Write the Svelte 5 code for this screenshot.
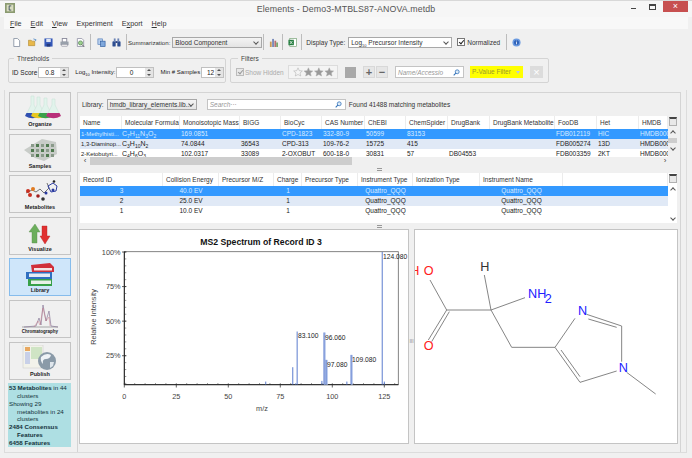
<script>
	const columnsA = ['Name', 'Molecular Formula', 'Monoisotopic Mass', 'BIGG', 'BioCyc', 'CAS Number', 'ChEBI', 'ChemSpider', 'DrugBank', 'DrugBank Metabolite', 'FooDB', 'Het', 'HMDB'];
	const metabolites = [
		{ name: '1-Methylhisti...', formula: [['C', 7], ['H', 11], ['N', 3], ['O', 2]], rest: ['169.0851', '', 'CPD-1823', '332-80-9', '50599', '83153', '', '', 'FDB012119', 'HIC', 'HMDB000'] },
		{ name: '1,3-Diaminop...', formula: [['C', 3], ['H', 10], ['N', 2]], rest: ['74.0844', '36543', 'CPD-313', '109-76-2', '15725', '415', '', '', 'FDB005274', '13D', 'HMDB000'] },
		{ name: '2-Ketobutyri...', formula: [['C', 4], ['H', 6], ['O', 3]], rest: ['102.0317', '33089', '2-OXOBUT', '600-18-0', '30831', '57', 'DB04553', '', 'FDB003359', '2KT', 'HMDB000'] }
	];
	const columnsB = ['Record ID', 'Collision Energy', 'Precursor M/Z', 'Charge', 'Precursor Type', 'Instrument Type', 'Ionization Type', 'Instrument Name', ''];
	const records = [
		['3', '40.0 EV', '', '1', '', 'Quattro_QQQ', '', 'Quattro_QQQ', ''],
		['2', '25.0 EV', '', '1', '', 'Quattro_QQQ', '', 'Quattro_QQQ', ''],
		['1', '10.0 EV', '', '1', '', 'Quattro_QQQ', '', 'Quattro_QQQ', '']
	];
	const navItems = ['Organize', 'Samples', 'Metabolites', 'Visualize', 'Library', 'Chromatography', 'Publish'];
	const flasks = [[10, '#2f4fb0'], [16, '#e8c820'], [23, '#3aa04a'], [31, '#b8307a']];

	// chart scales, in svg coordinates of the spectrum panel
	const xOf = (mz) => 44.3 + mz * 2.08;
	const yOf = (pct) => 160.3 - pct * 1.383;
	const peaks = [[68, 6.3], [81, 16.7], [82.4, 5], [83.1, 42.5], [95, 6.8], [96, 41.8], [97, 22], [107, 6.3], [109, 25.6], [124, 100], [125, 6.3]];
	const palePeaks = [[96, 41.8], [97, 22], [109, 25.6]];
	const peakLabels = [
		{ t: '83.100', x: 218, y: 108 }, { t: '96.060', x: 245, y: 110 },
		{ t: '97.080', x: 247, y: 137 }, { t: '109.080', x: 272, y: 132 }, { t: '124.080', x: 303, y: 29 }
	];
	const xTicks = [0, 25, 50, 75, 100, 125];
	const xMinor = Array.from({ length: 27 }, (_, i) => i * 5);
	const yTicks = [25, 50, 75, 100];
	const yMinor = Array.from({ length: 20 }, (_, i) => 5 + i * 5);
</script>

<div class="window">
	<header class="titlebar">
		<svg class="appicon" viewBox="0 0 12 12"><rect width="12" height="12" fill="#8a9a70"/><rect x="2" y="2" width="8" height="8" fill="#d8dcc0"/><path d="M7.5 3.5H5v5h2.5" stroke="#345" fill="none"/></svg>
		<span class="title">Elements - Demo3-MTBLS87-ANOVA.metdb</span>
		<div class="winbtns">
			<span class="min"></span>
			<span class="max"></span>
			<span class="close">×</span>
		</div>
	</header>

	<nav class="menubar">
		<span><u>F</u>ile</span>
		<span><u>E</u>dit</span>
		<span><u>V</u>iew</span>
		<span>Experiment</span>
		<span>E<u>x</u>port</span>
		<span><u>H</u>elp</span>
	</nav>

	<div class="toolbar">
		<svg class="tool" viewBox="0 0 10 10"><path d="M2 .5h4l2.500 2.500V9.500H2z" fill="#fff" stroke="#8b95a5"/></svg>
		<svg class="tool" viewBox="0 0 10 10"><path d="M.5 8.500V2.500h3l1 1h3v5z" fill="#e8b84a" stroke="#a87f25" stroke-width=".6"/><path d="M6 1l3 1-1 1.500" stroke="#5a90c8" fill="none"/></svg>
		<svg class="tool" viewBox="0 0 10 10"><rect x=".5" y=".5" width="9" height="9" fill="#3458b8"/><rect x="2.500" y="1" width="5" height="3.500" fill="#dfe6f5"/><rect x="3" y="6.500" width="4" height="3" fill="#24397a"/></svg>
		<svg class="tool" viewBox="0 0 10 10"><rect x="2.500" y=".5" width="5" height="4" fill="#fff" stroke="#889"/><rect x=".5" y="4" width="9" height="4" fill="#98a0aa"/><rect x="2" y="7" width="6" height="2.500" fill="#e8e8e8" stroke="#889" stroke-width=".5"/></svg>
		<svg class="tool gapr" viewBox="0 0 10 10"><path d="M1.500 .5h5l2 2v7h-7z" fill="#fff" stroke="#99a"/><circle cx="5" cy="5.500" r="2.300" fill="#9ccf8e" stroke="#4a7a4a" stroke-width=".7"/><path d="M6.500 7.200l2.500 2.500" stroke="#555" stroke-width="1.100"/></svg>
		<i class="sep"></i>
		<svg class="tool gapl" viewBox="0 0 10 10"><rect x="1" y="1" width="5" height="6" fill="#b9d0ee" stroke="#4a78b8" stroke-width=".7"/><rect x="4" y="3.500" width="5" height="6" fill="#7fa8dc" stroke="#2c5a9c" stroke-width=".7"/></svg>
		<svg class="tool gapl" viewBox="0 0 10 10"><rect x=".5" y="3.500" width="3.600" height="6" rx="1" fill="#2d4d90"/><rect x="5.900" y="3.500" width="3.600" height="6" rx="1" fill="#2d4d90"/><rect x="2" y=".5" width="2" height="4" fill="#6b83b5"/><rect x="6" y=".5" width="2" height="4" fill="#6b83b5"/><rect x="4" y="3.500" width="2" height="2" fill="#24397a"/></svg>
		<i class="sep tight"></i>
		<label class="tlabel narrow" for="summ">Summarization:</label>
		<div id="summ" class="combo summ">Blood Component<span class="chev"></span></div>
		<i class="sep"></i>
		<svg class="tool barsicon" viewBox="0 0 10 10"><rect x="1" y="4" width="2" height="6" fill="#c99a58"/><rect x="3.500" y="1" width="2" height="9" fill="#7486b8"/><rect x="6" y="3" width="2" height="7" fill="#b86f6f"/><rect x="8" y="5" width="2" height="5" fill="#7aa86f"/></svg>
		<i class="sep"></i>
		<svg class="tool xlsicon" viewBox="0 0 10 10"><rect x="2" y=".5" width="7.500" height="9" fill="#fff" stroke="#6a9a6a" stroke-width=".7"/><rect x=".5" y="2" width="6" height="6" fill="#1f7a3a"/><path d="M2 3.200l3 3.600M5 3.200l-3 3.600" stroke="#fff" stroke-width=".8"/></svg>
		<i class="sep short"></i>
		<span class="tlabel">Display Type:</span>
		<div class="combo disp">Log<sub>10</sub> Precursor Intensity<span class="chev"></span></div>
		<span class="check on norm"></span>
		<span class="tlabel normtext">Normalized</span>
		<i class="sep"></i>
		<svg class="tool info" viewBox="0 0 10 10"><circle cx="5" cy="5" r="4.500" fill="#6a9ae0"/><circle cx="5" cy="5" r="2.800" fill="#2f62b8"/><path d="M5 3v.8M5 4.500V7" stroke="#fff" stroke-width=".9"/></svg>
	</div>

	<div class="filterbar">
		<fieldset class="thresholds">
			<legend>Thresholds</legend>
			<span class="flabel">ID Score</span>
			<div class="spin w31"><b>0.8</b><span class="arrows"></span></div>
			<span class="flabel lm">Log<sub>10</sub> Intensity:</span>
			<div class="spin w38"><b>0</b><span class="arrows"></span></div>
			<span class="flabel lm">Min # Samples</span>
			<div class="spin w23"><b class="right">12</b><span class="arrows"></span></div>
		</fieldset>
		<fieldset class="filters">
			<legend>Filters</legend>
			<span class="check on dim"></span>
			<span class="flabel dimtext">Show Hidden</span>
			<div class="stars">
				<svg viewBox="0 0 48 12">
					{#each [0, 1, 2, 3] as i}
						<path transform="translate({i * 12.500},0)" d="M6 1l1.500 3.400 3.700.4-2.800 2.400.9 3.600L6 9l-3.300 1.800.9-3.600L.8 4.800l3.700-.4z" fill={i === 0 ? '#f4f4f4' : '#9a9a9a'} stroke="#a8a8a8" stroke-width=".6"/>
					{/each}
				</svg>
			</div>
			<span class="greybox"></span>
			<div class="plusminus"><span>+</span><span>−</span></div>
			<div class="search small">
				<em>Name/Accessio</em>
				<svg viewBox="0 0 10 10"><circle cx="6" cy="4" r="2.800" fill="#dcebf8" stroke="#2f6fb8" stroke-width="1.100"/><path d="M4 6L1 9" stroke="#2f6fb8" stroke-width="1.500"/></svg>
			</div>
			<div class="pvalue">P-Value Filter<span></span></div>
			<span class="xbox">×</span>
		</fieldset>
	</div>

	<div class="body">
		<aside class="sidebar">
			{#each navItems as item}
				<button class="navbtn" class:active={item === 'Library'}>
					<svg class="navicon" viewBox="0 0 44 26">
						{#if item === 'Organize'}
							{#each flasks as f, i}
								<path d="M{f[0] + 3} {1 + i}h3v{9 - i}l5 {10}q-6.500 4-13 0l5-{10}z" fill="#e2f3ec" stroke="#c4e0d4" stroke-width=".5"/>
								<path d="M{f[0] - 1.500} 18h12l1.500 3q-7.500 4.500-15 0z" fill={f[1]}/>
							{/each}
						{:else if item === 'Samples'}
							<path d="M6 13L24 2l14 3 1 12-13 7-9-3z" fill="#c8ccc8"/>
							{#each [0, 1, 2, 3, 4] as c}
								{#each [0, 1, 2] as r}
									<rect x={13 + c * 5} y={7 + r * 5} width="3" height="3" fill={(c + r) % 2 ? '#4f7a4f' : '#8a9a8a'}/>
								{/each}
							{/each}
						{:else if item === 'Metabolites'}
							<path d="M8 15l6-3 4 2 4-3 4 4 5-5-2-5" stroke="#555" stroke-width=".8" fill="none"/>
							<path d="M30 8l5-3 4 3-1 5-5 1z" stroke="#2a3aa0" fill="none"/>
							<circle cx="10" cy="13" r="2" fill="#c83020"/><circle cx="15" cy="11" r="2" fill="#e07a20"/><circle cx="12" cy="17" r="2" fill="#c83020"/>
							<circle cx="20" cy="18" r="1.800" fill="#a02020"/><circle cx="25" cy="21" r="1.800" fill="#333"/><circle cx="28" cy="15" r="1.500" fill="#2a3aa0"/>
							<circle cx="36" cy="3.500" r="1.300" fill="#222"/><circle cx="35" cy="12" r="1.500" fill="#2a3aa0"/>
						{:else if item === 'Visualize'}
							<path d="M17 4l-6 8h3v11h5V12h3z" fill="#6cae5c" stroke="#558a48" stroke-width=".4"/>
							<path d="M27 24l5-8h-3V6h-5v10h-2z" fill="#e03030" stroke="#b02020" stroke-width=".4"/>
						{:else if item === 'Library'}
							<path d="M10 18h24v7H10z" fill="#38a048"/><path d="M13 19.500h20v3.500H13z" fill="#e8f0e8"/>
							<path d="M8 11h26v7H8z" fill="#2f6fc0"/><path d="M11 12.500h21v3.500H11z" fill="#e4ecf6"/>
							<path d="M13 4l19-2 4 4v5H14z" fill="#d02f3a"/><path d="M16 7h18v2.500H16z" fill="#f4e4e4"/>
						{:else if item === 'Chromatography'}
							<path d="M4 24h36" stroke="#777" stroke-width=".6"/>
							<path d="M6 24l12-1 3-8 2 7 2-20 3 16 3-10 2 15 7 1" fill="none" stroke="#8a7a9a" stroke-width=".7"/>
							<path d="M16 24l4-6 2 4 3-17 3 13 3-4 1 9" fill="none" stroke="#c86a7a" stroke-width=".4"/>
						{:else}
							<rect x="5" y="0" width="20" height="23" fill="#f2f2ea" stroke="#c8c8c8" stroke-width=".5"/>
							<rect x="7" y="2" width="5" height="4" fill="#e8a860"/><rect x="13" y="2" width="11" height="12" fill="#cfe4c4"/><rect x="7" y="7" width="5" height="12" fill="#c8d0e8"/>
							<circle cx="29" cy="16" r="9" fill="#8a9aa8"/><path d="M23 12q5-5 10-2q-1 4-5 4t-3 5q-3-3-2-7z" fill="#eef2f6"/><path d="M32 17l4 0-1 4-3 2z" fill="#dfe6ec"/>
						{/if}
					</svg>
					<span class:mini={item === 'Chromatography'}>{item}</span>
				</button>
			{/each}
			<div class="stats">
				<p><b>53 Metabolites</b> in 44 clusters</p>
				<p>Showing 29 metabolites in 24 clusters</p>
				<p><b>2484 Consensus Features</b></p>
				<p><b>6458 Features</b></p>
			</div>
		</aside>

		<main class="content">
			<div class="libraryrow">
				<span class="tlabel">Library:</span>
				<div class="combo lib">hmdb_library_elements.lib...<span class="chev"></span></div>
				<div class="search wide">
					<em>Search···</em>
					<svg viewBox="0 0 10 10"><circle cx="6" cy="4" r="2.800" fill="#dcebf8" stroke="#2f6fb8" stroke-width="1.100"/><path d="M4 6L1 9" stroke="#2f6fb8" stroke-width="1.500"/></svg>
				</div>
				<span class="tlabel found">Found 41488 matching metabolites</span>
			</div>

			<section class="table one">
				<div class="tablemain">
					<div class="row head cols-a">
						{#each columnsA as c}<div class="th">{c}</div>{/each}
					</div>
					<div class="rows">
						{#each metabolites as m, i}
							<div class="row cols-a" class:selected={i === 0} class:alt={i === 1}>
								<div class="td name">{m.name}</div>
								<div class="td formula">{#each m.formula as f}{f[0]}<sub>{f[1]}</sub>{/each}</div>
								{#each m.rest as v}<div class="td">{v}</div>{/each}
							</div>
						{/each}
					</div>
					<div class="hscroll"><span class="arrow">‹</span><div class="thumb"></div><span class="arrow rt">›</span></div>
				</div>
				<div class="vscroll">
					<div class="corner"></div>
					<span class="up"></span>
					<div class="vthumb"></div>
					<span class="down"></span>
				</div>
			</section>
			<div class="grip"><span></span></div>

			<section class="table two">
				<div class="tablemain">
					<div class="row head cols-b">
						{#each columnsB as c}<div class="th">{c}</div>{/each}
					</div>
					<div class="rows tall">
						{#each records as r, i}
							<div class="row cols-b" class:selected={i === 0} class:alt={i === 1}>
								{#each r as v}<div class="td mid">{v}</div>{/each}
							</div>
						{/each}
					</div>
				</div>
				<div class="vscroll">
					<div class="corner"></div>
					<span class="up"></span>
					<div class="spacer"></div>
					<span class="down"></span>
				</div>
			</section>
			<div class="grip low"><span></span></div>

			<div class="panes">
				<div class="pane chart">
					<svg viewBox="0 0 328 213" width="328" height="213">
						<text x="181" y="15" class="charttitle" text-anchor="middle">MS2 Spectrum of Record ID 3</text>
						<rect x="44.300" y="21.700" width="274" height="133" fill="#fff" stroke="#666" stroke-width=".8"/>
						<path d="M44.300 21.700v133h274" stroke="#111" stroke-width=".9" fill="none"/>
						{#each yMinor as p}<line x1="44.300" x2="46.300" y1={yOf(p)} y2={yOf(p)} stroke="#333" stroke-width=".5"/>{/each}
						{#each yTicks as p}
							<line x1="42" x2="46.300" y1={yOf(p)} y2={yOf(p)} stroke="#222" stroke-width=".7"/>
							<text x="40.500" y={yOf(p) + 2.500} class="tick" text-anchor="end">{p}%</text>
						{/each}
						{#each xMinor as m}<line y1="154.700" y2="153" x1={xOf(m)} x2={xOf(m)} stroke="#333" stroke-width=".5"/>{/each}
						{#each xTicks as m}
							<line y1="154.700" y2="157.500" x1={xOf(m)} x2={xOf(m)} stroke="#222" stroke-width=".7"/>
							<text x={xOf(m)} y="168.500" class="tick" text-anchor="middle">{m}</text>
						{/each}
						{#each palePeaks as p}
							<rect x={xOf(p[0])} y={yOf(p[1])} width="1.800" height={154.700 - yOf(p[1])} fill="#b8c8ec"/>
						{/each}
						{#each peaks as p}
							<line x1={xOf(p[0])} x2={xOf(p[0])} y1={yOf(p[1])} y2="154.700" stroke="#4a6ec8" stroke-width=".9"/>
						{/each}
						{#each peakLabels as l}
							<text x={l.x} y={l.y} class="peak">{l.t}</text>
						{/each}
						<text x="182" y="180.500" class="tick" text-anchor="middle">m/z</text>
						<text transform="translate(16,87) rotate(-90)" class="tick" text-anchor="middle">Relative Intensity</text>
					</svg>
				</div>
				<div class="divider"><span>III</span></div>
				<div class="pane molecule">
					<svg viewBox="30 5 786 639" width="262" height="213">
						<g stroke="#777" stroke-width="2.700" fill="none">
							<path d="M125 245L75 155"/>
							<path d="M125 245L70 335M133 250L80 340"/>
							<path d="M125 245H258L238 140"/>
							<path d="M258 245L360 208"/>
							<path d="M258 245L320 357H450L510 270"/>
							<path d="M545 258L650 293M550 272L635 297"/>
							<path d="M650 293V400"/>
							<path d="M635 428L525 462L450 357M525 445L468 365"/>
							<path d="M665 432L752 497"/>
						</g>
						<g class="atom">
							<text x="16" y="141" fill="#ff2020">H</text>
							<text x="56" y="141" fill="#ff2020">O</text>
							<text x="56" y="364" fill="#ff2020">O</text>
							<text x="226" y="127" fill="#333">H</text>
							<text x="369" y="210" fill="#2020ff">NH</text>
							<text x="419" y="225" fill="#2020ff">2</text>
							<text x="519" y="260" fill="#2020ff">N</text>
							<text x="641" y="431" fill="#2020ff">N</text>
						</g>
					</svg>
				</div>
			</div>
		</main>
	</div>
</div>

<style>
	:global(body) {
		margin: 0;
		background: #f0f0f0;
	}

	.window {
		width: 692px;
		height: 458px;
		overflow: hidden;
		display: flex;
		flex-direction: column;
		font-family: "Liberation Sans", Arial, sans-serif;
		font-size: 6.5px;
		color: #222;
		background: #f0f0f0;
	}

	.window sub {
		font-size: 4px;
		line-height: 0;
	}

	.titlebar {
		height: 17px;
		flex: none;
		box-sizing: border-box;
		border-top: 1px solid #d8d8d8;
		display: flex;
		align-items: center;
		justify-content: center;
		background: #f6f6f6;
		position: relative;
	}

	.appicon {
		position: absolute;
		left: 5px;
		top: 2px;
		width: 10px;
		height: 10px;
	}

	.title {
		font-size: 8.800px;
		color: #555;
		letter-spacing: 0.1px;
	}

	.winbtns {
		position: absolute;
		right: 4px;
		top: 0;
		display: flex;
		align-items: flex-start;
	}

	.min {
		width: 5px;
		height: 1px;
		background: #444;
		margin: 7px 13px 0 0;
	}

	.max {
		width: 5px;
		height: 3px;
		border: 1px solid #444;
		border-top-width: 2px;
		margin: 3px 7px 0 0;
	}

	.close {
		width: 25px;
		height: 11px;
		line-height: 11px;
		background: #c75050;
		color: #fff;
		text-align: center;
		font-size: 9px;
	}

	.menubar {
		height: 12px;
		flex: none;
		margin: 0 4px;
		padding-left: 6px;
		display: flex;
		gap: 9px;
		align-items: center;
		background: #f8f8f8;
		font-size: 7.200px;
		color: #333;
	}

	.toolbar {
		height: 26px;
		flex: none;
		margin: 0 4px;
		padding-left: 8px;
		display: flex;
		align-items: center;
		background: #f0f0f0;
	}

	.tool {
		width: 9px;
		height: 9px;
		flex: none;
		margin-right: 7px;
	}

	.gapr {
		margin-right: 5px;
	}

	.gapl {
		margin-left: 1px;
		margin-right: 5px;
	}

	.barsicon {
		margin: 0 4px 0 0;
	}

	.xlsicon {
		margin: 0 4px 0 0;
	}

	.info {
		margin: 0;
	}

	.sep {
		width: 1px;
		height: 16px;
		background: #bcbcbc;
		margin: 0 5px 0 0;
		flex: none;
	}

	.sep.tight {
		margin-right: 1px;
	}

	.sep.short {
		margin-right: 4px;
	}

	.tlabel {
		white-space: nowrap;
		color: #333;
	}

	.narrow {
		font-size: 6.100px;
	}

	.combo {
		height: 11px;
		line-height: 10px;
		box-sizing: border-box;
		border: 1px solid #a8a8a8;
		background: linear-gradient(#f4f4f4, #e4e4e4);
		padding-left: 2px;
		position: relative;
		white-space: nowrap;
		overflow: hidden;
		flex: none;
		color: #333;
	}

	.chev {
		position: absolute;
		right: 3px;
		top: 2px;
		width: 3px;
		height: 3px;
		border-right: 1px solid #555;
		border-bottom: 1px solid #555;
		transform: rotate(45deg);
	}

	.summ {
		width: 90px;
		margin: 0 1px 0 2px;
	}

	.disp {
		width: 104px;
		margin-left: 3px;
		background: #fff;
	}

	.check {
		width: 6px;
		height: 6px;
		border: 1px solid #777;
		background: #fff;
		flex: none;
		position: relative;
	}

	.check.on::after {
		content: '';
		position: absolute;
		left: 1.500px;
		top: -0.500px;
		width: 2px;
		height: 4px;
		border-right: 1.3px solid #222;
		border-bottom: 1.3px solid #222;
		transform: rotate(40deg);
	}

	.norm {
		margin-left: 5px;
	}

	.normtext {
		margin: 0 6px 0 2px;
	}

	.filterbar {
		height: 32px;
		flex: none;
		margin: 0 0 0 8px;
		display: flex;
		gap: 4px;
	}

	fieldset {
		margin: 0;
		padding: 0 0 0 3px;
		height: 28px;
		min-width: 0;
		box-sizing: border-box;
		border: 1px solid #d4d4d4;
		border-radius: 2px;
		display: flex;
		align-items: center;
	}

	legend {
		padding: 0 3px;
		margin-left: 2px;
		font-size: 6.500px;
		line-height: 7px;
		color: #444;
	}

	.thresholds {
		width: 218px;
	}

	.filters {
		width: 319px;
		padding-left: 5px;
	}

	.flabel {
		white-space: nowrap;
	}

	.lm {
		margin-left: 6px;
		font-size: 6px;
	}

	.spin {
		height: 11px;
		box-sizing: border-box;
		border: 1px solid #c0c0c0;
		background: #fff;
		display: flex;
		align-items: center;
		flex: none;
		margin-left: 1px;
	}

	.spin b {
		flex: 1;
		font-weight: normal;
		text-align: center;
	}

	.spin b.right {
		text-align: right;
		padding-right: 1px;
	}

	.arrows {
		width: 8px;
		height: 100%;
		background: #e4e4e4;
		position: relative;
	}

	.arrows::before,
	.arrows::after {
		content: '';
		position: absolute;
		left: 2px;
		border-left: 2px solid transparent;
		border-right: 2px solid transparent;
	}

	.arrows::before {
		top: 1px;
		border-bottom: 2px solid #555;
	}

	.arrows::after {
		bottom: 1px;
		border-top: 2px solid #555;
	}

	.w31 { width: 31px; }
	.w38 { width: 38px; }
	.w23 { width: 23px; }

	.dim {
		background: #e8e8e8;
		border-color: #bbb;
	}

	.dim.on::after {
		border-color: #999;
	}

	.dimtext {
		color: #aaa;
		width: 37px;
		margin-left: 1px;
	}

	.stars {
		width: 50px;
		height: 14px;
		box-sizing: border-box;
		margin-left: 6px;
		padding: 1px 2px;
		border: 1px solid #dcdcdc;
		background: #f4f4f4;
		flex: none;
	}

	.stars svg {
		display: block;
		width: 100%;
		height: 100%;
	}

	.greybox {
		width: 11px;
		height: 11px;
		background: #a9a9a9;
		margin-left: 7px;
		flex: none;
	}

	.plusminus {
		display: flex;
		gap: 1px;
		margin-left: 7px;
		flex: none;
	}

	.plusminus span {
		width: 12px;
		height: 12px;
		line-height: 11px;
		background: #e6e6e6;
		border: 1px solid #d8d8d8;
		box-sizing: border-box;
		text-align: center;
		font-size: 11px;
		font-weight: bold;
		color: #666;
	}

	.search {
		height: 11px;
		box-sizing: border-box;
		border: 1px solid #c4c4c4;
		background: #fff;
		display: flex;
		align-items: center;
		justify-content: space-between;
		padding: 0 3px 0 2px;
		flex: none;
	}

	.search em {
		color: #999;
		font-style: italic;
	}

	.search svg {
		width: 7px;
		height: 7px;
	}

	.search.small {
		width: 69px;
		height: 12px;
		margin-left: 7px;
	}

	.search.wide {
		width: 139px;
		margin-left: 10px;
	}

	.pvalue {
		width: 53px;
		height: 12px;
		line-height: 12px;
		margin-left: 6px;
		padding-left: 2px;
		box-sizing: border-box;
		background: #ffff00;
		color: #9a9a30;
		position: relative;
		flex: none;
		white-space: nowrap;
	}

	.pvalue span {
		position: absolute;
		right: 3px;
		top: 5px;
		border-left: 2px solid transparent;
		border-right: 2px solid transparent;
		border-top: 3px solid #b8c8e0;
	}

	.xbox {
		width: 13px;
		height: 12px;
		line-height: 12px;
		margin-left: 7px;
		background: #dcdcdc;
		color: #fff;
		text-align: center;
		font-size: 11px;
		flex: none;
	}

	.body {
		flex: 1;
		min-height: 0;
		display: flex;
		margin: 3px 5px 5px 4px;
		border: 1px solid #dcdcdc;
		border-top: 0;
	}

	.sidebar {
		width: 71px;
		flex: none;
		box-sizing: border-box;
		padding: 2px 0 0 3px;
		display: flex;
		flex-direction: column;
		gap: 3.600px;
	}

	.navbtn {
		width: 62px;
		height: 38px;
		flex: none;
		margin: 0 0 0 1px;
		padding: 0;
		box-sizing: border-box;
		border: 1px solid #c4c4c4;
		background: #f0f0f0;
		display: flex;
		flex-direction: column;
		align-items: center;
		font-family: inherit;
		font-size: 5.500px;
		font-weight: bold;
		color: #222;
	}

	.navbtn.active {
		background: #cfe6fa;
		border-color: #86bcec;
	}

	.navicon {
		width: 44px;
		height: 26px;
		margin-top: 2px;
		flex: none;
	}

	.mini {
		font-size: 4.500px;
	}

	.stats {
		width: 63px;
		height: 64px;
		flex: none;
		box-sizing: border-box;
		background: #aedfe3;
		padding: 1px 0 0 1px;
		font-size: 6.200px;
		line-height: 7.800px;
		color: #14323a;
	}

	.stats p {
		margin: 0;
		padding-left: 8px;
		text-indent: -8px;
	}

	.content {
		flex: 1;
		min-width: 0;
		box-sizing: border-box;
		margin: 2px 5px 0 1px;
		padding: 0 0 0 1px;
		border: 1px solid #d4d4d4;
		border-bottom: 0;
		display: flex;
		flex-direction: column;
	}

	.libraryrow {
		height: 23px;
		flex: none;
		display: flex;
		align-items: center;
		padding-left: 3px;
	}

	.lib {
		width: 90px;
		margin-left: 3px;
	}

	.found {
		margin-left: 3px;
	}

	.table {
		display: flex;
		flex: none;
		margin-left: 1px;
		width: 597px;
	}

	.table.one {
		height: 49px;
	}

	.table.two {
		height: 50px;
		background: #fff;
	}

	.tablemain {
		width: 588px;
		flex: none;
		overflow: hidden;
	}

	.row {
		display: grid;
		height: 10px;
		line-height: 10px;
		white-space: nowrap;
	}

	.cols-a {
		grid-template-columns: 42px 58px 60px 41px 41px 43px 41px 42px 42px 65px 42px 42px 29px;
	}

	.cols-b {
		grid-template-columns: 83px 56px 55px 28px 56px 55px 67px 83px 105px;
	}

	.head {
		height: 13px;
		line-height: 13px;
		background: #fff;
	}

	.th {
		padding-left: 3px;
		border-right: 1px solid #ececec;
		overflow: hidden;
		color: #333;
	}

	.rows {
		height: 28px;
		overflow: hidden;
		background: #fff;
	}

	.rows.tall {
		height: 37px;
	}

	.td {
		padding-left: 1px;
		overflow: hidden;
	}

	.td.mid {
		padding: 0;
		text-align: center;
	}

	.name {
		font-size: 5.900px;
	}

	.formula {
		padding-left: 0;
		font-size: 7px;
		line-height: 9px;
	}

	.formula sub {
		font-size: 5px;
	}

	.selected {
		background: #3399ff;
		color: #d9ecff;
	}

	.alt {
		background: #e0e9f6;
	}

	.hscroll {
		height: 8px;
		background: #f0f0f0;
		display: flex;
		align-items: center;
		position: relative;
	}

	.arrow {
		width: 10px;
		text-align: center;
		font-size: 8px;
		line-height: 8px;
		color: #444;
	}

	.arrow.rt {
		margin-left: auto;
		width: 6px;
	}

	.thumb {
		width: 262px;
		height: 8px;
		background: #cdcdcd;
	}

	.vscroll {
		width: 9px;
		flex: none;
		display: flex;
		flex-direction: column;
		align-items: center;
		background: #f0f0f0;
	}

	.corner {
		width: 8px;
		height: 9px;
		margin: 1px 0 2px;
		box-sizing: border-box;
		border: 1px solid #b0b0b0;
		border-top: 2px solid #444;
		background: #e8e8e8;
	}

	.up,
	.down {
		width: 3px;
		height: 3px;
		margin: 3px 0;
		border-left: 1px solid #555;
		border-top: 1px solid #555;
		transform: rotate(45deg);
		flex: none;
	}

	.down {
		transform: rotate(225deg);
	}

	.vthumb {
		width: 9px;
		height: 5px;
		background: #cdcdcd;
	}

	.spacer {
		flex: 1;
	}

	.table.one .vscroll {
		height: 41px;
	}

	.table.two .vscroll {
		background: #fff;
	}

	.grip {
		height: 8px;
		flex: none;
		display: flex;
		justify-content: center;
		align-items: center;
	}

	.grip.low {
		height: 6px;
	}

	.grip span {
		width: 5px;
		height: 3px;
		border-top: 1px solid #999;
		border-bottom: 1px solid #999;
		box-sizing: border-box;
	}

	.panes {
		flex: 1;
		min-height: 0;
		display: flex;
	}

	.pane {
		background: #fff;
		border: 1px solid #c4c4c4;
		box-sizing: border-box;
		height: 215px;
		overflow: hidden;
		flex: none;
	}

	.pane svg {
		display: block;
	}

	.pane.chart {
		width: 330px;
	}

	.pane.molecule {
		width: 264px;
	}

	.divider {
		width: 5px;
		flex: none;
		display: flex;
		align-items: center;
		justify-content: center;
		font-size: 5px;
		color: #888;
	}

	.charttitle {
		font-size: 8.700px;
		font-weight: bold;
		fill: #111;
	}

	.tick {
		font-size: 7.300px;
		fill: #444;
	}

	.peak {
		font-size: 6.700px;
		fill: #222;
	}

	.atom text {
		font-size: 38px;
		font-family: "Liberation Sans", Arial, sans-serif;
	}
</style>
